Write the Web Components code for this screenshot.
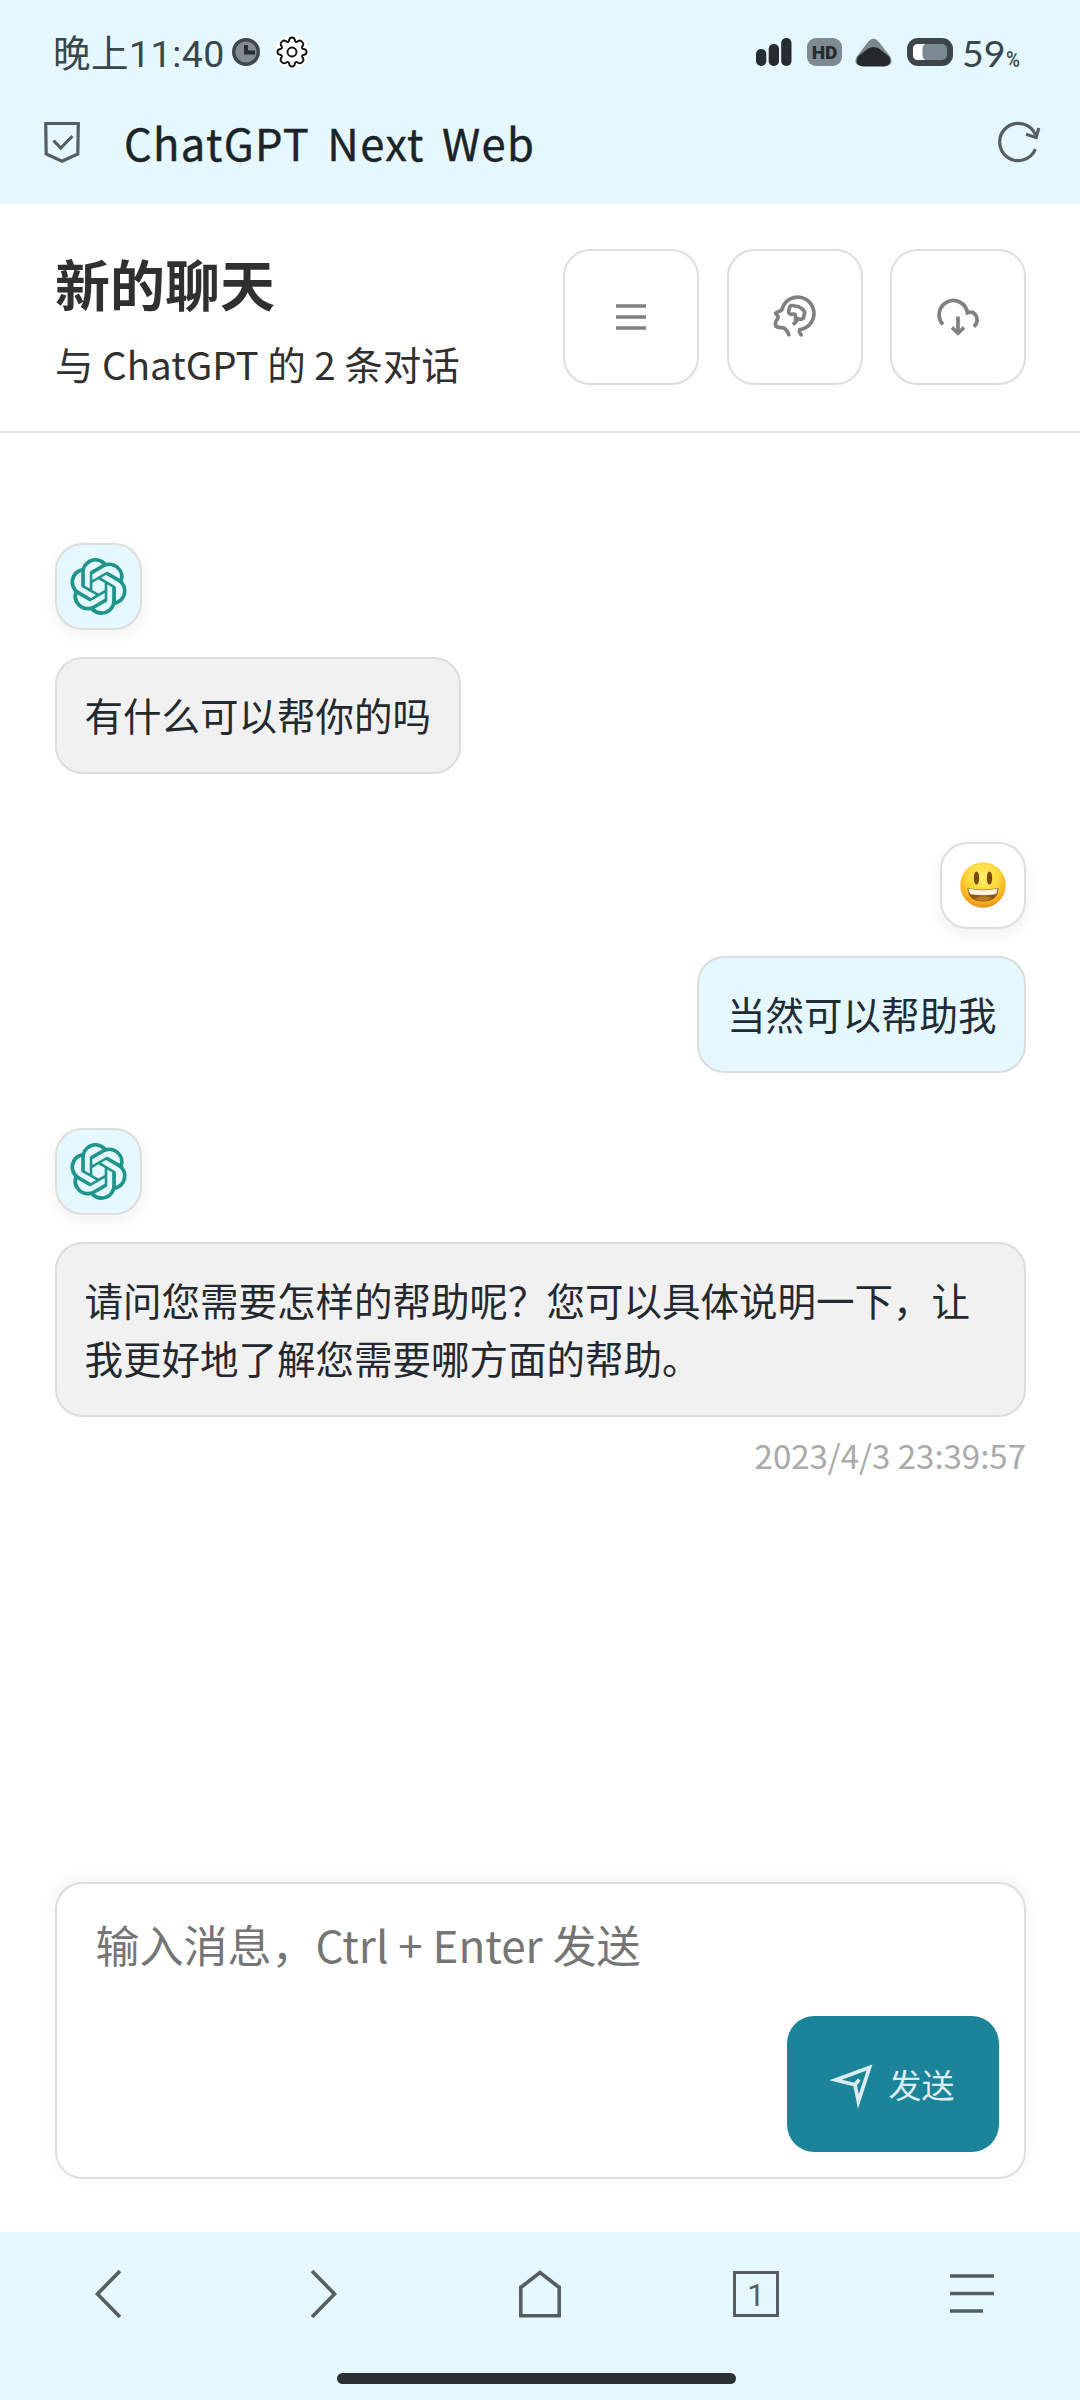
<!DOCTYPE html>
<html lang="zh-CN">
<head>
<meta charset="utf-8">
<meta name="viewport" content="width=device-width">
<title>ChatGPT Next Web</title>
<style>
html,body{margin:0;padding:0;background:#fefefe}
body{width:1080px;height:2400px;overflow:hidden;font-family:"Noto Sans CJK SC","Noto Sans",sans-serif;color:#303030}
</style>
</head>
<body>
<phone-screen>
  <status-bar slot="top" time="晚上11:40" battery="59"></status-bar>
  <browser-bar slot="top">ChatGPT Next Web</browser-bar>
  <chat-header>
    <span slot="title">新的聊天</span>
    <span slot="sub">与 ChatGPT 的 2 条对话</span>
    <icon-button slot="actions" icon="menu"></icon-button>
    <icon-button slot="actions" icon="brain"></icon-button>
    <icon-button slot="actions" icon="cloud"></icon-button>
  </chat-header>
  <chat-list>
    <chat-message>有什么可以帮你的吗</chat-message>
    <chat-message user style="margin-top:68px">当然可以帮助我</chat-message>
    <chat-message style="margin-top:55px" date="2023/4/3 23:39:57">请问您需要怎样的帮助呢？您可以具体说明一下，让我更好地了解您需要哪方面的帮助。</chat-message>
  </chat-list>
  <chat-composer slot="bottom" label="发送">输入消息，Ctrl + Enter 发送</chat-composer>
  <nav-bar slot="bottom" tabs="1"></nav-bar>
</phone-screen>
<script>
const define = (name, render) => customElements.define(name, class extends HTMLElement {
  constructor() { super(); this.attachShadow({mode: 'open'}); }
  connectedCallback() {
    this.shadowRoot.innerHTML = '<style>*{box-sizing:border-box}svg{display:block;flex:none;overflow:visible}:host{box-sizing:border-box}</style>' + render(this);
  }
});

define('phone-screen', () => `<style>
:host{display:flex;flex-direction:column;width:1080px;height:2400px}
.top{background:#e6f8ff;height:204px;flex:none}
main{flex:1;display:flex;flex-direction:column;min-height:0}
</style><div class="top"><slot name="top"></slot></div><main><slot></slot></main><slot name="bottom"></slot>`);

define('status-bar', el => `<style>
:host{display:flex;align-items:center;height:104px;padding:0 58px 0 53px;color:#39464c}
.time{font-family:Roboto,"Noto Sans CJK SC",sans-serif;font-size:37.5px;line-height:54px;letter-spacing:.5px;width:179px;white-space:nowrap;padding-top:3px}
.gear{margin-left:15px}.grow{flex:1}
.hd{width:35px;height:28px;border-radius:9px;background:#7f8b93;color:#262b2e;font:900 19px/30px Roboto,sans-serif;text-align:center;margin:0 13px 0 15px}
.pct{display:flex;align-items:baseline;margin-left:9px;width:60px;white-space:nowrap;font:37.5px/54px Lato,sans-serif;padding-top:1px}
.pct small{display:block;font:500 22px/30px Roboto,sans-serif;margin-left:0;width:15px;transform:scaleX(.86);transform-origin:0 50%}
</style>
<div class="time">${el.getAttribute('time')}</div>
<svg width="28" height="28" viewBox="0 0 28 28"><circle cx="14" cy="14" r="12.3" fill="#818b90" stroke="#3d474b" stroke-width="3.4"/><path d="M14 7V14.5H23" fill="none" stroke="#262f33" stroke-width="4"/></svg>
<svg class="gear" width="34" height="34" viewBox="0 0 34 34"><circle cx="17" cy="17" r="17" fill="#fff"/><path fill="none" stroke="#111" stroke-width="1.9" stroke-linejoin="round" d="M14.2 5Q14.5 2.5 17 2.5T19.8 5Q20.2 7.4 22 6.9Q24.3 4.3 26.7 6.4Q29.7 8.7 27.2 11.5Q26.4 14 28.8 14Q31.5 14.3 31.5 17T28.8 19.8Q26.5 20.2 27.2 22Q29.7 24.7 27.2 27.1Q24.7 29.5 22 27.1Q20.2 26.5 19.8 29Q19.5 31.5 17 31.5T14.2 29Q13.8 26.5 12 27.1Q9.3 29.5 6.8 27.1Q4.3 24.7 6.8 22Q7.5 20.2 5.2 19.8Q2.5 19.5 2.5 17T5.2 14Q7.5 13.8 6.8 11.5Q4.3 9 7.2 6.4Q9.7 4.3 12 6.9Q13.8 7.4 14.2 5Z"/><circle cx="17" cy="17" r="4.5" fill="none" stroke="#111" stroke-width="1.9"/></svg>
<div class="grow"></div>
<svg width="36" height="28" viewBox="0 0 36 28" fill="#262c2f"><rect x="0" y="11" width="10.3" height="17" rx="5"/><rect x="12.7" y="6" width="10.3" height="22" rx="5"/><rect x="25.2" y="0" width="10.3" height="28" rx="5"/></svg>
<div class="hd">HD</div>
<svg width="37" height="29" viewBox="0 0 37 29"><path d="M1.5 19L13 4Q18.500-3 24 4L35.500 19Q39 26 32 28H5Q-2 26 1.500 19Z" fill="#7d888e"/><path d="M3 18.500L13 10.500Q18.500 7.500 24 10.500L34 18.500Q38 26 30 28.500H8Q-1 27 3 18.500Z" fill="#25292b"/></svg>
<svg style="margin-left:15px" width="46" height="28" viewBox="0 0 46 28"><rect width="46" height="28" rx="11" fill="#3d474b"/><rect x="6" y="6" width="34" height="16" rx="5" fill="#7e8a91"/><path d="M11 6h7q-2.500 1.500-2.500 4v8q0 2.500 2.500 4h-7q-5 0-5-5v-6q0-5 5-5z" fill="#fff"/></svg>
<div class="pct">${el.getAttribute('battery')}<small>%</small></div>`);

define('browser-bar', () => `<style>
:host{display:flex;align-items:center;height:76px;padding:0 40px 0 44px;color:#1d2427}
.name{margin-left:44px;flex:1;font-size:43.5px;line-height:64px;padding-top:2px;letter-spacing:1.35px;word-spacing:6px;white-space:nowrap;-webkit-text-stroke:.4px #1d2427}
</style>
<svg width="36" height="42" viewBox="0 0 36 42" fill="none" stroke="#565e62" stroke-width="3.200"><path d="M1.700 2.500H34.300L33.800 33L18 40.200L2.200 33Z"/><path d="M9.500 19.500L16.800 27L28.500 15"/></svg>
<span class="name"><slot></slot></span>
<svg width="42" height="42" viewBox="0 0 42 42" fill="none" stroke="#565e62" stroke-width="3.200"><path d="M37.400 28.200A18.600 18.600 0 1 1 37.500 14"/><path d="M28 13.200L38.200 16.500L40.800 7"/></svg>`);

define('chat-header', () => `<style>
:host{display:flex;justify-content:space-between;align-items:flex-start;height:229px;padding:45px 54px 0 55px;border-bottom:2px solid #e7e7e7}
.h{margin-top:-5px}
.t{font-size:55px;font-weight:700;line-height:76px;white-space:nowrap}
.s{font-size:38.500px;line-height:54px;margin-top:16px;white-space:nowrap}
.a{display:flex;gap:27.500px}
</style><div class="h"><div class="t"><slot name="title"></slot></div><div class="s"><slot name="sub"></slot></div></div><div class="a"><slot name="actions"></slot></div>`);

const ICONS = {
  menu: '<path d="M7 11H37M7 22H37M7 33H37"/>',
  brain: '<path transform="translate(-1.500 0)" stroke-linecap="round" stroke-linejoin="round" d="M17.300 39.800Q16 35.500 13 33.200Q11.500 32.500 8 32.300Q4.200 32.300 3.900 29.500Q4 26 6.500 22.800Q7 20.800 4 18.300Q5 17 8 16.200Q11 15 11.300 12.200A16.200 16.300 0 1 1 28.300 34.600Q27 36.500 29.700 39.800"/><path transform="translate(-1.500 0)" stroke-linecap="round" stroke-linejoin="round" d="M22.500 28.500Q25.500 27 25.500 23.500Q32.500 26 32.500 20Q34.500 17 30.500 13.800Q27 10.800 23.500 11Q18.500 9.500 18 12.500Q15.500 19.500 20.500 19.300Q24 18.300 24 21V25.500"/>',
  cloud: '<path d="M7 29.500A14.200 14.200 0 1 1 31.400 17.800Q37 15.700 40 20.500Q43 26.500 38 31.800"/><path d="M22 21.500V38"/><path d="M16 32.500L22 38.300L28 32.500"/>'
};
define('icon-button', el => `<style>
:host{display:flex;align-items:center;justify-content:center;width:136px;height:136px;border:2px solid #dedede;border-radius:27.500px;background:#fff}
</style><svg width="44" height="44" viewBox="0 0 44 44" fill="none" stroke="#808080" stroke-width="3.700">${ICONS[el.getAttribute('icon')]}</svg>`);

define('chat-list', () => `<style>:host{display:flex;flex-direction:column;padding:110px 54px 0 55px}</style><slot></slot>`);

const BOT = `<svg width="57" height="57" viewBox="0 0 24 24" fill="#1f948a"><path d="M22.2819 9.8211a5.9847 5.9847 0 0 0-.5157-4.9108 6.0462 6.0462 0 0 0-6.5098-2.9A6.0651 6.0651 0 0 0 4.9807 4.1818a5.9847 5.9847 0 0 0-3.9977 2.9 6.0462 6.0462 0 0 0 .7427 7.0966 5.98 5.98 0 0 0 .511 4.9107 6.051 6.051 0 0 0 6.5146 2.9001A5.9847 5.9847 0 0 0 13.2599 24a6.0557 6.0557 0 0 0 5.7718-4.2058 5.9894 5.9894 0 0 0 3.9977-2.9001 6.0557 6.0557 0 0 0-.7475-7.0729zm-9.022 12.6081a4.4755 4.4755 0 0 1-2.8764-1.0408l.1419-.0804 4.7783-2.7582a.7948.7948 0 0 0 .3927-.6813v-6.7369l2.02 1.1686a.071.071 0 0 1 .038.052v5.5826a4.504 4.504 0 0 1-4.4945 4.4944zm-9.6607-4.1254a4.4708 4.4708 0 0 1-.5346-3.0137l.142.0852 4.783 2.7582a.7712.7712 0 0 0 .7806 0l5.8428-3.3685v2.3324a.0804.0804 0 0 1-.0332.0615L9.74 19.9502a4.4992 4.4992 0 0 1-6.1408-1.6464zM2.3408 7.8956a4.485 4.485 0 0 1 2.3655-1.9728V11.6a.7664.7664 0 0 0 .3879.6765l5.8144 3.3543-2.0201 1.1685a.0757.0757 0 0 1-.071 0l-4.8303-2.7865A4.504 4.504 0 0 1 2.3408 7.872zm16.5963 3.8558L13.1038 8.364 15.1192 7.2a.0757.0757 0 0 1 .071 0l4.8303 2.7913a4.4944 4.4944 0 0 1-.6765 8.1042v-5.6772a.79.79 0 0 0-.407-.667zm2.0107-3.0231l-.142-.0852-4.7735-2.7818a.7759.7759 0 0 0-.7854 0L9.409 9.2297V6.8974a.0662.0662 0 0 1 .0284-.0615l4.8303-2.7866a4.4992 4.4992 0 0 1 6.6802 4.66zM8.3065 12.863l-2.02-1.1638a.0804.0804 0 0 1-.038-.0567V6.0742a4.4992 4.4992 0 0 1 7.3757-3.4537l-.142.0805L8.704 5.459a.7948.7948 0 0 0-.3927.6813zm1.0976-2.3654l2.602-1.4998 2.6069 1.4998v2.9994l-2.5974 1.4997-2.6067-1.4997Z"/></svg>`;
const SMILE = `<svg width="46" height="46" viewBox="0 0 46 46"><defs><radialGradient id="g" cx=".5" cy=".32" r=".68"><stop offset="0" stop-color="#fff06a"/><stop offset=".5" stop-color="#fdd83a"/><stop offset=".8" stop-color="#f8b420"/><stop offset="1" stop-color="#e98c10"/></radialGradient></defs><circle cx="23" cy="23" r="22.700" fill="url(#g)"/><ellipse cx="16.500" cy="16" rx="2.700" ry="6.600" fill="#7a4a08"/><ellipse cx="29.500" cy="16" rx="2.700" ry="6.600" fill="#7a4a08"/><path d="M7.500 26Q23 29.500 38.500 26Q38 39.500 23 39.500T7.500 26Z" fill="#8c5510"/><path d="M8.300 26.500Q23 30 37.700 26.500Q37.500 30.500 35.500 32.200Q23 34.500 10.500 32.200Q8.500 30.500 8.300 26.500Z" fill="#fff3df"/><path d="M14.500 36.500Q23 32 31.500 36.500Q28 39 23 39T14.500 36.500Z" fill="#b57a24"/></svg>`;
define('chat-message', el => {
  const user = el.hasAttribute('user'), date = el.getAttribute('date');
  return `<style>
:host{display:flex;flex-direction:column;align-items:${user ? 'flex-end' : 'flex-start'}}
.av{width:${user ? 86 : 87}px;height:87px;border:2px solid #dedede;border-radius:27.500px;display:flex;align-items:center;justify-content:center;background:${user ? '#fff' : '#e6f8ff'};box-shadow:0 5px 14px rgba(0,0,0,.05)}
.b{margin-top:27px;border:2px solid #dcdddd;border-radius:27.500px;padding:${user ? '27.500px' : date ? '27.500px 27.500px 28px' : '26.500px 27.500px 28.500px'};font-size:38.500px;line-height:57.750px;color:${user ? '#1f2b35' : '#24292f'};background:${user ? '#e6f8ff' : '#f1f1f1'}}
.d{align-self:flex-end;margin-top:13px;font-size:33px;line-height:50px;color:#aaa}
</style><div class="av">${user ? SMILE : BOT}</div><div class="b"><slot></slot></div>${date ? `<div class="d">${date}</div>` : ''}`;
});

define('chat-composer', el => `<style>
:host{display:block;padding:0 54px 53px 55px;flex:none}
.box{height:297px;border:2px solid #dedede;border-radius:27.500px;background:#fff;box-shadow:0 -4px 16px rgba(0,0,0,.04);padding:27px 25px 25px 38.500px;display:flex;flex-direction:column;justify-content:space-between}
.ph{font-size:44px;line-height:66px;color:#757575;white-space:nowrap}
.send{align-self:flex-end;width:212px;height:136px;border-radius:27.500px;background:#1b8499;display:flex;align-items:center;padding-left:42.500px;color:#dcecf5;font-size:33px;line-height:48px;gap:15px;white-space:nowrap}
</style><div class="box"><div class="ph"><slot></slot></div><div class="send"><svg width="44" height="44" viewBox="0 0 44 44" fill="none" stroke="#dcecf5" stroke-width="3.700"><path d="M39.500 5.500L5.500 18L25 22.800L28.400 39.500Z"/><path d="M25 22.800L29.200 17.500"/></svg>${el.getAttribute('label')}</div></div>`);

define('nav-bar', el => `<style>
:host{display:flex;flex-direction:column;height:168px;background:#e6f8ff;flex:none}
.r{display:flex;width:100%;height:123.500px;align-items:center}
.c{flex:1;display:flex;justify-content:center}
.n{width:46px;height:46px;border:3.500px solid #565e62;color:#565e62;font:31px/43px Roboto,sans-serif;text-align:center}
.h{width:399px;height:11px;border-radius:6px;background:#2c3233;margin:17.500px 0 0 337px}
svg{fill:none;stroke:#565e62;stroke-width:3.600}
</style><div class="r">
<div class="c"><svg width="26" height="48" viewBox="0 0 26 48"><path d="M25 1L2.500 24L25 47"/></svg></div>
<div class="c"><svg width="26" height="48" viewBox="0 0 26 48"><path d="M1 1L23.500 24L1 47"/></svg></div>
<div class="c"><svg width="42" height="48" viewBox="0 0 42 48"><path d="M1.800 17.500L21 2.500L40.200 17.500V45.800H1.800Z"/></svg></div>
<div class="c"><div class="n">${el.getAttribute('tabs')}</div></div>
<div class="c"><svg width="44" height="48" viewBox="0 0 44 48"><path d="M0 6H44M0 23.500H44M0 41H33"/></svg></div>
</div><div class="h"></div>`);
</script>
</body>
</html>
